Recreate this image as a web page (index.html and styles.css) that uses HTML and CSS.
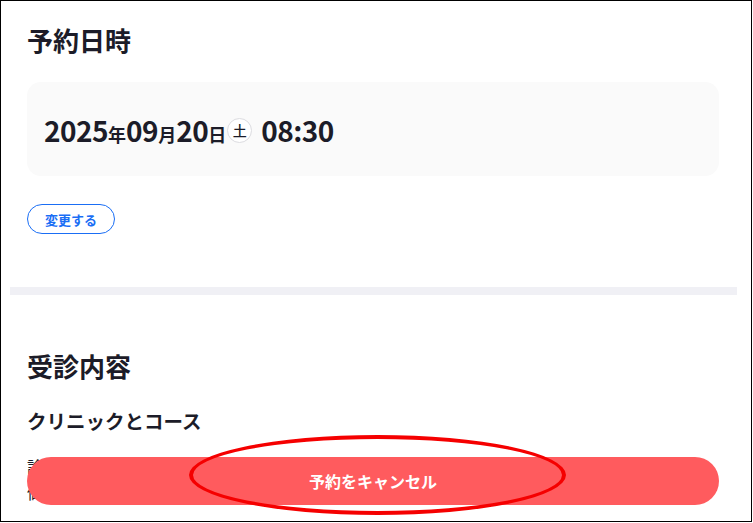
FILE: index.html
```html
<!DOCTYPE html>
<html lang="ja">
<head>
<meta charset="utf-8">
<title>予約詳細</title>
<link rel="stylesheet" href="styles.css">
</head>
<body>
<div class="frame">
  <section class="section first">
    <h1 class="title">予約日時</h1>
    <div class="date-card">
      <div class="date">
        <span class="num">2025</span><span class="unit">年</span><span class="num">09</span><span class="unit">月</span><span class="num">20</span><span class="unit">日</span><span class="dow">土</span><span class="num time">08:30</span>
      </div>
    </div>
    <button class="change-btn">変更する</button>
  </section>
  <div class="divider"></div>
  <section class="section second">
    <h2 class="title">受診内容</h2>
    <h3 class="subtitle">クリニックとコース</h3>
    <p class="detail">診察コース</p>
    <p class="detail">価格</p>
  </section>
  <div class="cancel-bar">
    <button class="cancel-btn">予約をキャンセル</button>
  </div>
  <div class="annotation"></div>
</div>
</body>
</html>
```
FILE: styles.css
```css
* { box-sizing: border-box; }
html, body { margin: 0; padding: 0; background: #fff; }
body {
  font-family: "Noto Sans CJK JP", "Noto Sans", sans-serif;
  color: #1c1c28;
}
.frame {
  position: relative;
  width: 752px;
  height: 522px;
  border: 1px solid #000;
  overflow: hidden;
}
.section {
  padding: 0 32px 0 26px;
}
.section.first { padding-top: 19px; padding-bottom: 53px; }
.title {
  margin: 0;
  font-size: 26px;
  line-height: 39px;
  font-weight: 700;
}
.date-card {
  margin-top: 23px;
  height: 94px;
  background: #fafafa;
  border-radius: 14px;
  padding-left: 17px;
  display: flex;
  align-items: center;
}
.date {
  display: flex;
  align-items: baseline;
  font-weight: 700;
  padding-top: 2px;
}
.num { font-size: 28px; line-height: 1; letter-spacing: -0.5px; }
.unit { font-size: 18px; line-height: 1; }
.dow {
  align-self: center;
  width: 25px;
  height: 25px;
  border: 1px solid #dcdce0;
  border-radius: 50%;
  display: flex;
  align-items: center;
  justify-content: center;
  font-size: 14px;
  font-weight: 500;
  margin-left: 1px;
  background: #fff;
}
.time { margin-left: 9px; }
.change-btn {
  margin-top: 28px;
  display: block;
  width: 88px;
  height: 30px;
  padding: 0;
  border: 1px solid #1a6ef5;
  border-radius: 15px;
  background: #fff;
  color: #1a6ef5;
  font-family: inherit;
  font-size: 13px;
  font-weight: 700;
}
.divider {
  height: 8px;
  margin: 0 14px 0 9px;
  background: #f0f0f5;
}
.section.second { padding-top: 51px; }
.subtitle {
  margin: 21px 0 0;
  font-size: 19.5px;
  line-height: 30px;
  font-weight: 700;
}
.detail {
  margin: 20px 0 0;
  font-size: 16px;
  line-height: 20px;
}
.detail + .detail { margin-top: 6px; }
.cancel-bar {
  position: absolute;
  left: 26px;
  right: 32px;
  top: 456px;
}
.cancel-btn {
  display: block;
  width: 100%;
  height: 48px;
  border: 0;
  border-radius: 24px;
  background: #ff5b5e;
  color: #fff;
  font-family: inherit;
  font-size: 16px;
  font-weight: 700;
}
.annotation {
  position: absolute;
  left: 188px;
  top: 434px;
  width: 377px;
  height: 80px;
  border: 4px solid #f50000;
  border-radius: 50%;
}
```
